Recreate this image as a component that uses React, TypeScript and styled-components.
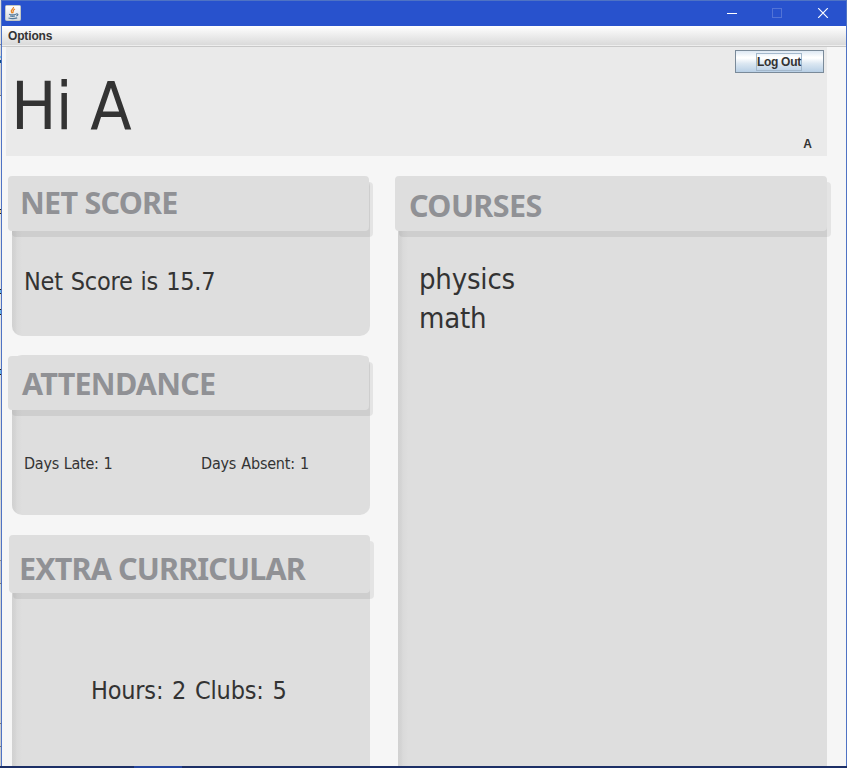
import React from 'react';
import styled, { createGlobalStyle } from 'styled-components';

const Global = createGlobalStyle`
  * { box-sizing: border-box; }
  html, body { margin: 0; padding: 0; overflow: hidden; }
  body { font-family: 'DejaVu Sans Condensed', 'DejaVu Sans', sans-serif; color: #333; }
`;

const Desktop = styled.div`
  width: 847px;
  height: 768px;
  display: grid;
  grid-template-columns: 1px 846px;
  grid-template-rows: 766px 2px;
  overflow: hidden;
`;

const Behind = styled.div`
  background: linear-gradient(#dedede 0 44px, #888 44px 45px, #d8d8d8 45px 56px, #7ab8e8 56px 58px,
    #d8d8d8 58px 60px, #0a4a88 60px 63px, #d0d0d0 63px 95px, #777 95px 96px, #ededed 96px 209px,
    #222 209px 210px, #e8c890 210px 213px, #222 213px 214px, #e4e4e4 214px 289px, #222 289px 290px,
    #6ab4e8 290px 293px, #222 293px 294px, #e4e4e4 294px 309px, #222 309px 310px, #6ab4e8 310px 314px,
    #222 314px 315px, #e4e4e4 315px 369px, #222 369px 370px, #6ab4e8 370px 374px, #222 374px 375px,
    #dedede 375px 480px, #c9d6bd 480px 500px, #d6d6d6 500px 560px, #888 560px 561px, #c8c8c8 561px 583px,
    #777 583px 584px, #d0d6cc 584px 600px, #d0d0d0 600px 723px, #777 723px 724px, #ccc 724px 746px,
    #777 746px 747px, #ccc 747px);
`;

const Taskbar = styled.div`
  grid-column: 1 / -1;
  background: linear-gradient(90deg, #1c2f66 134px, #26469e 134px 182px, #1c2f66 182px);
`;

const Window = styled.main`
  display: flex;
  flex-direction: column;
  overflow: hidden;
  background: #f6f6f6;
  border: 1px solid #4f73c4;
  border-bottom: 0;
`;

const TitleBar = styled.header`
  flex: none;
  height: 25px;
  display: flex;
  align-items: center;
  justify-content: space-between;
  padding: 0 17px 1px 3px;
  background: #2852cd;
`;

const Controls = styled.div`
  display: flex;
  align-items: center;
  gap: 35px;
  svg { display: block; }
`;

const MenuBar = styled.nav`
  flex: none;
  height: 21px;
  padding: 1px 6px 0;
  border-bottom: 1px solid #c8c8c8;
  background: linear-gradient(#fff, #dadada 19px, #eee 19px);
  font: bold 12px/19px 'Liberation Sans', sans-serif;
  letter-spacing: -0.15px;
`;

const Hero = styled.section`
  flex: none;
  width: 821px;
  height: 109px;
  margin-left: 4px;
  padding: 3px 3px 0 5px;
  display: flex;
  justify-content: space-between;
  background: #eaeaea;
`;

const Greeting = styled.h1`
  margin: 17px 0 0;
  font-size: 65px;
  line-height: 80px;
  font-weight: 400;
  letter-spacing: -0.8px;
  white-space: nowrap;
  transform: scaleX(1.036);
  transform-origin: left;
`;

const Account = styled.div`
  display: flex;
  flex-direction: column;
  justify-content: space-between;
  align-items: flex-end;
  font: bold 12px/14px 'Liberation Sans', sans-serif;
`;

const LogOut = styled.button`
  width: 89px;
  height: 23px;
  padding: 0 1px 0 0;
  display: flex;
  align-items: center;
  justify-content: center;
  border: 1px solid #7a8a99;
  background: linear-gradient(#dde8f3, #fff 30%, #fff 34%, #dbe7f2 60%, #b8cfe5);
  color: #333;
  font: inherit;
  span {
    height: 18px;
    width: 46px;
    border: 1px solid #a3b8cc;
    line-height: 17px;
    letter-spacing: -0.3px;
    text-align: left;
    white-space: nowrap;
  }
`;

const UserName = styled.span`
  padding: 0 12px 5px 0;
`;

const Columns = styled.div`
  display: grid;
  grid-template-columns: 358px 429px;
  column-gap: 28px;
  padding: 20px 0 0 10px;
  height: 610px;
`;

const Stack = styled.div`
  display: flex;
  flex-direction: column;
  gap: 20px;
`;

const Card = styled.section<{ $h: number; $pull?: number }>`
  flex: none;
  height: ${p => p.$h}px;
  margin-top: -${p => p.$pull ?? 0}px;
  border-radius: 10px;
  background: linear-gradient(90deg, #d1d1d1 0, #d4d4d4 3px, #dadada 5px, #dedede 10px);
`;

const CardTitle = styled.h2<{ $w: number; $h: number; $x: number; $drop?: number; $pad: string; $track: number }>`
  width: ${p => p.$w}px;
  height: ${p => p.$h}px;
  margin: 0 0 0 ${p => p.$x}px;
  padding: ${p => p.$pad};
  border-radius: 4px;
  background: #dedede;
  box-shadow: 4px 6px 0 rgba(0, 0, 0, 0.072);
  transform: translateY(${p => p.$drop ?? 0}px);
  color: #909195;
  font: bold 30.5px/30px 'Noto Sans', sans-serif;
  letter-spacing: ${p => p.$track}px;
  white-space: nowrap;
`;

const Line = styled.p<{ $size: number; $lh: number; $pad: string; $track: number; $word?: number }>`
  margin: 0;
  padding: ${p => p.$pad};
  font-size: ${p => p.$size}px;
  line-height: ${p => p.$lh}px;
  letter-spacing: ${p => p.$track}px;
  word-spacing: ${p => p.$word ?? 0}px;
  white-space: nowrap;
`;

const Days = styled.div`
  display: grid;
  grid-template-columns: 177px 1fr;
  padding: 43px 0 0 12px;
`;

const JavaIcon = () => (
  <svg width="16" height="16" viewBox="0 0 16 16" fill="none">
    <defs>
      <linearGradient id="tile" x2="0" y2="1">
        <stop stopColor="#fff" />
        <stop offset="1" stopColor="#d5dbe0" />
      </linearGradient>
    </defs>
    <rect x=".5" y=".5" width="15" height="15" rx="1" fill="url(#tile)" stroke="#c2c7c4" />
    <path d="M8.5 2C9 4 5 5 6.5 7.2L7.5 8.3M10 4C7 5.3 8.8 6.4 7.8 7.8" stroke="#e98524" strokeWidth="1.3" />
    <path d="M4 9.3c2 .7 5 .6 7 0M5 11c1.7.6 3.5.5 5 0M3.5 13c3 .9 6 .8 8.7-.1M11 9c2.6-.7 2.4 1.6.2 2" stroke="#557b9b" strokeWidth="1.2" />
  </svg>
);

export default function App() {
  return (
    <>
      <Global />
      <Desktop>
        <Behind />
        <Window>
          <TitleBar>
            <JavaIcon />
            <Controls>
              <svg width="10" height="10"><path d="M0 5.5h10" stroke="#fff" /></svg>
              <svg width="10" height="10"><rect x=".5" y=".5" width="9" height="9" fill="none" stroke="#5273d6" /></svg>
              <svg width="12" height="10"><path d="M1.2.2l9.6 9.6M10.8.2L1.2 9.8" stroke="#fff" strokeWidth="1.2" /></svg>
            </Controls>
          </TitleBar>
          <MenuBar>Options</MenuBar>
          <Hero>
            <Greeting>Hi A</Greeting>
            <Account>
              <LogOut><span>Log Out</span></LogOut>
              <UserName>A</UserName>
            </Account>
          </Hero>
          <Columns>
            <Stack>
              <Card $h={160}>
                <CardTitle $w={361} $h={55} $x={-4} $pad="11px 0 0 12px" $track={-0.75}>NET SCORE</CardTitle>
                <Line $size={25} $lh={30} $pad="36px 0 0 12px" $track={-0.25} $word={1.2}>Net Score is 15.7</Line>
              </Card>
              <Card $h={160} $pull={1}>
                <CardTitle $w={361} $h={54} $x={-4} $drop={1} $pad="12px 0 0 14px" $track={-0.75}>ATTENDANCE</CardTitle>
                <Days>
                  <Line $size={16} $lh={24} $pad="0" $track={-0.25} $word={0.5}>Days Late: 1</Line>
                  <Line $size={16} $lh={24} $pad="0" $track={-0.2} $word={0.8}>Days Absent: 1</Line>
                </Days>
              </Card>
              <Card $h={260}>
                <CardTitle $w={361} $h={58} $x={-3} $pad="18px 0 0 10px" $track={-0.85}>EXTRA CURRICULAR</CardTitle>
                <Line $size={25} $lh={30} $pad="83px 0 0 79px" $track={-0.2} $word={1.9}>Hours: 2 Clubs: 5</Line>
              </Card>
            </Stack>
            <Card $h={620}>
              <CardTitle $w={432} $h={55} $x={-3} $pad="14px 0 0 14px" $track={-0.6}>COURSES</CardTitle>
              <Line $size={29} $lh={39} $pad="29px 0 0 21px" $track={-0.2}>physics<br />math</Line>
            </Card>
          </Columns>
        </Window>
        <Taskbar />
      </Desktop>
    </>
  );
}
